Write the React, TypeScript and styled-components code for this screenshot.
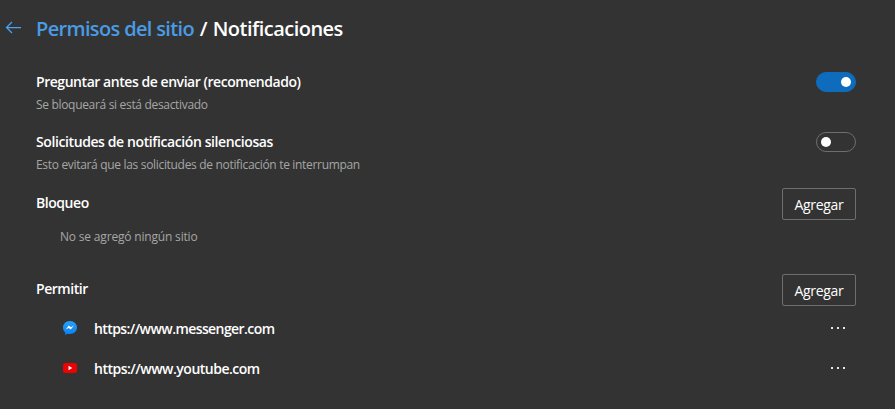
import React from 'react'
import styled, { createGlobalStyle } from 'styled-components'

const GlobalStyle = createGlobalStyle`
  html, body {
    margin: 0;
    padding: 0;
    background: #333333;
  }
  body {
    font-family: "Open Sans", "Noto Sans", sans-serif;
    color: #ffffff;
  }
`

const Page = styled.div`
  width: 895px;
  height: 409px;
  box-sizing: border-box;
  padding: 0 39px 0 36px;
  overflow: hidden;
  background: #333333;
`

const Header = styled.div`
  height: 58px;
  display: flex;
  align-items: center;
  margin-left: -31px;
  gap: 14px;
`

const BackButton = styled.button`
  width: 17px;
  height: 16px;
  padding: 0;
  border: 0;
  background: none;
  display: flex;
  color: #4aa3f0;
`

const Title = styled.h1`
  margin: 0;
  font-size: 20px;
  line-height: 28px;
  font-weight: 600;
  letter-spacing: -0.52px;
  word-spacing: 1px;
  color: #ffffff;
`

const Crumb = styled.a`
  color: #4a9be3;
  font-weight: 600;
  letter-spacing: -0.65px;
  word-spacing: 0;
`

const SettingRow = styled.div`
  height: 58px;
  display: flex;
  align-items: flex-start;
  justify-content: space-between;
`

const FirstSetting = styled(SettingRow)`
  padding-top: 3px;
  height: 60px;
  margin-top: 9px;
`

const SettingText = styled.div`
  display: flex;
  flex-direction: column;
  gap: 5px;
  padding-top: 2px;
`

const Label = styled.div<{ $spacing?: number }>`
  font-size: 14px;
  line-height: 20px;
  font-weight: 600;
  letter-spacing: ${p => p.$spacing ?? -0.45}px;
  color: #ffffff;
`

const SectionLabel = styled(Label)`
  padding-bottom: 2px;
`

const Hint = styled.div`
  font-size: 12px;
  line-height: 16px;
  letter-spacing: -0.32px;
  color: #a6a6a6;
`

const Toggle = styled.div<{ $on?: boolean }>`
  width: 40px;
  height: 20px;
  box-sizing: border-box;
  margin-top: 2px;
  border-radius: 10px;
  display: flex;
  align-items: center;
  padding: 0 4px;
  justify-content: ${p => (p.$on ? 'flex-end' : 'flex-start')};
  background: ${p => (p.$on ? '#0f6cbd' : 'transparent')};
  border: 1px solid ${p => (p.$on ? '#0f6cbd' : '#6e6e6e')};
`

const Knob = styled.span`
  width: 10px;
  height: 10px;
  border-radius: 50%;
  background: #ffffff;
`

const SectionHead = styled.div`
  height: 32px;
  display: flex;
  align-items: center;
  justify-content: space-between;
`

const AddButton = styled.button`
  width: 74px;
  height: 32px;
  box-sizing: border-box;
  border: 1px solid #6e6e6e;
  border-radius: 2px;
  background: transparent;
  color: #ffffff;
  font-family: inherit;
  font-size: 14px;
  letter-spacing: -0.3px;
  padding: 0;
`

const Empty = styled.div`
  height: 54px;
  padding: 7px 0 0 24px;
  box-sizing: border-box;
  font-size: 12px;
  line-height: 20px;
  letter-spacing: -0.18px;
  color: #a6a6a6;
`

const SiteRow = styled.div`
  height: 40px;
  display: flex;
  align-items: center;
  padding-left: 26px;
`

const SiteList = styled.div`
  padding-top: 2px;
`

const SiteIcon = styled.svg`
  width: 16px;
  height: 16px;
  flex: none;
  margin-right: 16px;
`

const SiteUrl = styled.div<{ $spacing: number }>`
  flex: 1;
  font-size: 14px;
  font-weight: 600;
  letter-spacing: ${p => p.$spacing}px;
`

const MoreButton = styled.button`
  width: 40px;
  height: 20px;
  padding: 0;
  margin-right: -2px;
  border: 0;
  background: none;
  display: flex;
  justify-content: center;
  align-items: center;
  gap: 4px;
`

const Dot = styled.span`
  width: 2px;
  height: 2px;
  background: #e6e6e6;
`

const More = () => (
  <MoreButton aria-label="Más acciones">
    <Dot />
    <Dot />
    <Dot />
  </MoreButton>
)

const App = () => (
  <Page>
    <GlobalStyle />
    <Header>
      <BackButton aria-label="Atrás">
        <svg width="17" height="16" viewBox="0 0 17 16" fill="none" stroke="currentColor" strokeWidth="1.25">
          <path d="M1.5 6.5H16M7 1L1.500 6.500L7 12" />
        </svg>
      </BackButton>
      <Title>
        <Crumb>Permisos del sitio</Crumb> / Notificaciones
      </Title>
    </Header>

    <FirstSetting>
      <SettingText>
        <Label>Preguntar antes de enviar (recomendado)</Label>
        <Hint>Se bloqueará si está desactivado</Hint>
      </SettingText>
      <Toggle $on>
        <Knob />
      </Toggle>
    </FirstSetting>

    <SettingRow>
      <SettingText>
        <Label $spacing={-0.4}>Solicitudes de notificación silenciosas</Label>
        <Hint>Esto evitará que las solicitudes de notificación te interrumpan</Hint>
      </SettingText>
      <Toggle>
        <Knob />
      </Toggle>
    </SettingRow>

    <SectionHead>
      <SectionLabel>Bloqueo</SectionLabel>
      <AddButton>Agregar</AddButton>
    </SectionHead>
    <Empty>No se agregó ningún sitio</Empty>

    <SectionHead>
      <SectionLabel>Permitir</SectionLabel>
      <AddButton>Agregar</AddButton>
    </SectionHead>
    <SiteList>
      <SiteRow>
        <SiteIcon viewBox="0 0 16 16">
          <defs>
            <linearGradient id="messengerFill" x1="0" y1="0" x2="0" y2="1">
              <stop offset="0" stopColor="#27a2fb" />
              <stop offset="1" stopColor="#0b7ff0" />
            </linearGradient>
          </defs>
          <path
            fill="url(#messengerFill)"
            d="M8 1C3.900 1 1 3.900 1 7.600c0 2 .8 3.700 2.200 4.900v2.400l2.200-1.200c.8.200 1.700.4 2.600.4 4.100 0 7-2.900 7-6.500S12.100 1 8 1z"
          />
          <path fill="#ffffff" d="M3.800 9.600l3-4.100 2.100 1.700 2.900-1.700-3 4.100-2.100-1.700z" />
        </SiteIcon>
        <SiteUrl $spacing={-0.58}>https://www.messenger.com</SiteUrl>
        <More />
      </SiteRow>
      <SiteRow>
        <SiteIcon viewBox="0 0 16 16">
          <rect x="1" y="3" width="14" height="10" rx="2.500" fill="#f00000" />
          <path fill="#ffffff" d="M6.500 5.800v4.400L10.300 8z" />
        </SiteIcon>
        <SiteUrl $spacing={-0.5}>https://www.youtube.com</SiteUrl>
        <More />
      </SiteRow>
    </SiteList>
  </Page>
)

export default App
